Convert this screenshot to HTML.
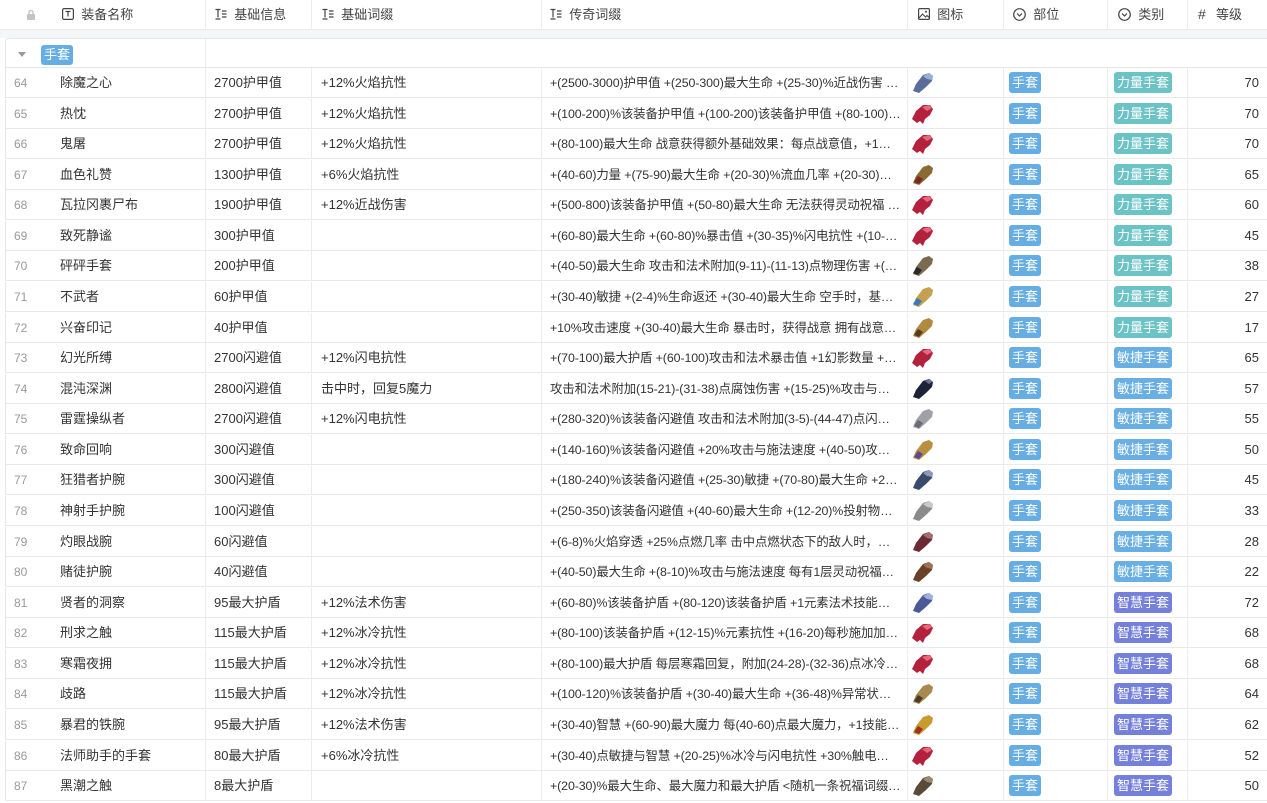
<!DOCTYPE html>
<html><head><meta charset="utf-8">
<style>
*{box-sizing:border-box;margin:0;padding:0}
body{width:1267px;height:803px;overflow:hidden;background:#fff;font-family:"Liberation Sans","Noto Sans CJK SC",sans-serif;font-size:13px;color:#333;position:relative}
.hd{position:absolute;left:0;top:0;width:1267px;height:30px;border-bottom:1px solid #ebebeb;background:#fff}
.hc{position:absolute;top:0;height:30px;line-height:29px;color:#444;font-size:13px;white-space:nowrap}
.vl{position:absolute;top:0;width:1px;height:30px;background:#ececec}
.band{position:absolute;left:0;top:30px;width:1267px;height:8px;background:#f5f6f7}
.grp{position:absolute;left:5px;top:38px;width:1262px;height:30px;background:#fff;border-top:1px solid #e6e6e6;border-left:1px solid #e6e6e6;border-bottom:1px solid #e6e6e6;border-top-left-radius:4px}
.row{position:absolute;left:5px;width:1262px;height:30px;border-bottom:1px solid #e9e9e9;border-left:1px solid #e6e6e6;background:#fff}
.c{position:absolute;top:0;height:29px;line-height:30px;white-space:nowrap;overflow:hidden}
.n{left:8px;color:#999;font-size:12px}
.nm{left:54px}
.b1{left:199px;width:106px;border-left:1px solid #ececec;padding-left:8px}
.b2{left:305px;width:230px;border-left:1px solid #ececec;padding-left:9px}
.b3{left:535px;width:366px;border-left:1px solid #ececec;padding-left:8px;padding-right:6px;text-overflow:ellipsis;font-size:12.4px;letter-spacing:-0.1px}
.b4{left:901px;width:96px;border-left:1px solid #ececec;padding-left:4px}
.b5{left:997px;width:104px;border-left:1px solid #ececec;padding-left:5px}
.b6{left:1101px;width:80px;border-left:1px solid #ececec;padding-left:6px}
.b7{left:1181px;width:81px;border-left:1px solid #ececec;text-align:right;padding-right:9px}
.t{display:inline-block;height:21px;line-height:21px;padding:0 3px;border-radius:3px;color:#fff;font-size:13px;vertical-align:middle;margin-top:-2px}
.sh{background:#66ade3}
.ll{background:#6cc3c6}
.mj{background:#6aafe4}
.zh{background:#7580da}
svg.g{position:absolute;left:3px;top:3px}
</style></head><body>
<div class="hd">
<span class="hc" style="left:26px;color:#bbb"><svg width="10" height="11" viewBox="0 0 10 11" style="vertical-align:-1px"><rect x="1" y="5" width="8" height="6" rx="1" fill="#c4c4c4"/><path d="M3 5V3.5a2 2 0 0 1 4 0V5" stroke="#c4c4c4" stroke-width="1.4" fill="none"/></svg></span>
<span class="hc" style="left:62px"><svg width="12" height="12" viewBox="0 0 12 12" style="vertical-align:-1px"><rect x="0.6" y="0.6" width="10.8" height="10.8" rx="1.5" fill="none" stroke="#444" stroke-width="1.2"/><path d="M3.5 3.5h5M6 3.5v5" stroke="#444" stroke-width="1.2"/></svg>&nbsp; 装备名称</span>
<span class="hc" style="left:215px"><svg width="12" height="12" viewBox="0 0 12 12" style="vertical-align:-1px"><path d="M0.5 1.5h5M3 1.5v8M0.5 11h5M7 3h4.5M7 6h4.5M7 9h4.5" stroke="#444" stroke-width="1.2"/></svg>&nbsp; 基础信息</span>
<span class="hc" style="left:322px"><svg width="12" height="12" viewBox="0 0 12 12" style="vertical-align:-1px"><path d="M0.5 1.5h5M3 1.5v8M0.5 11h5M7 3h4.5M7 6h4.5M7 9h4.5" stroke="#444" stroke-width="1.2"/></svg>&nbsp; 基础词缀</span>
<span class="hc" style="left:550px"><svg width="12" height="12" viewBox="0 0 12 12" style="vertical-align:-1px"><path d="M0.5 1.5h5M3 1.5v8M0.5 11h5M7 3h4.5M7 6h4.5M7 9h4.5" stroke="#444" stroke-width="1.2"/></svg>&nbsp; 传奇词缀</span>
<span class="hc" style="left:918px"><svg width="12" height="12" viewBox="0 0 12 12" style="vertical-align:-1px"><rect x="0.6" y="0.6" width="10.8" height="10.8" rx="1" fill="none" stroke="#444" stroke-width="1.2"/><path d="M1 10l3.5-4 3 3 1.5-1.5 2 2" stroke="#444" stroke-width="1.1" fill="none"/><circle cx="8" cy="3.8" r="1" fill="#444"/></svg>&nbsp; 图标</span>
<span class="hc" style="left:1013px"><svg width="13" height="13" viewBox="0 0 13 13" style="vertical-align:-2px"><circle cx="6.5" cy="6.5" r="5.8" fill="none" stroke="#444" stroke-width="1.2"/><path d="M4 5.5l2.5 2.5 2.5-2.5" stroke="#444" stroke-width="1.2" fill="none"/></svg>&nbsp; 部位</span>
<span class="hc" style="left:1118px"><svg width="13" height="13" viewBox="0 0 13 13" style="vertical-align:-2px"><circle cx="6.5" cy="6.5" r="5.8" fill="none" stroke="#444" stroke-width="1.2"/><path d="M4 5.5l2.5 2.5 2.5-2.5" stroke="#444" stroke-width="1.2" fill="none"/></svg>&nbsp; 类别</span>
<span class="hc" style="left:1198px;font-size:14px">#</span><span class="hc" style="left:1216px">等级</span>
<div class="vl" style="left:205px"></div><div class="vl" style="left:311px"></div><div class="vl" style="left:541px"></div><div class="vl" style="left:907px"></div><div class="vl" style="left:1003px"></div><div class="vl" style="left:1107px"></div><div class="vl" style="left:1187px"></div>
</div>
<div class="band"></div>
<div class="grp">
<svg width="8" height="6" viewBox="0 0 8 6" style="position:absolute;left:12px;top:13px"><path d="M0 0h8L4 5z" fill="#999"/></svg>
<span class="t sh" style="position:absolute;left:35px;top:6px;margin:0;height:20px;line-height:20px;padding:0 3px">手套</span>
<div style="position:absolute;left:199px;top:0;width:1px;height:29px;background:#ececec"></div>
</div>

<div class="row" style="top:68px"><div class="c n">64</div><div class="c nm">除魔之心</div><div class="c b1">2700护甲值</div><div class="c b2">+12%火焰抗性</div><div class="c b3">+(2500-3000)护甲值 +(250-300)最大生命 +(25-30)%近战伤害 +(15-20)%攻击速度</div><div class="c b4"><svg class="g" width="24" height="24" viewBox="0 0 24 24"><path d="M2 20l3-7 7-9 6-2 4 3-1 5-6 6-7 6z" fill="#5a6c9a"/><path d="M12 5l6-3 4 3-1 4-5-1z" fill="#9ab0d8"/></svg></div><div class="c b5"><span class="t sh">手套</span></div><div class="c b6"><span class="t ll">力量手套</span></div><div class="c b7">70</div></div>
<div class="row" style="top:99px"><div class="c n">65</div><div class="c nm">热忱</div><div class="c b1">2700护甲值</div><div class="c b2">+12%火焰抗性</div><div class="c b3">+(100-200)%该装备护甲值 +(100-200)该装备护甲值 +(80-100)最大生命</div><div class="c b4"><svg class="g" width="24" height="24" viewBox="0 0 24 24"><path d="M1 17l4-8 7-6 7 0 3 4-3 6-5 4-2 5-3-3-3 2z" fill="#b3213c"/><path d="M11 5l7-2 3 3-5 3z" fill="#e56a7a"/></svg></div><div class="c b5"><span class="t sh">手套</span></div><div class="c b6"><span class="t ll">力量手套</span></div><div class="c b7">70</div></div>
<div class="row" style="top:129px"><div class="c n">66</div><div class="c nm">鬼屠</div><div class="c b1">2700护甲值</div><div class="c b2">+12%火焰抗性</div><div class="c b3">+(80-100)最大生命 战意获得额外基础效果：每点战意值，+1%技能伤害</div><div class="c b4"><svg class="g" width="24" height="24" viewBox="0 0 24 24"><path d="M1 17l4-8 7-6 7 0 3 4-3 6-5 4-2 5-3-3-3 2z" fill="#b3213c"/><path d="M11 5l7-2 3 3-5 3z" fill="#e56a7a"/></svg></div><div class="c b5"><span class="t sh">手套</span></div><div class="c b6"><span class="t ll">力量手套</span></div><div class="c b7">70</div></div>
<div class="row" style="top:160px"><div class="c n">67</div><div class="c nm">血色礼赞</div><div class="c b1">1300护甲值</div><div class="c b2">+6%火焰抗性</div><div class="c b3">+(40-60)力量 +(75-90)最大生命 +(20-30)%流血几率 +(20-30)%流血伤害</div><div class="c b4"><svg class="g" width="24" height="24" viewBox="0 0 24 24"><path d="M2 20l3-7 7-9 6-2 4 3-1 5-6 6-7 6z" fill="#8a6a30"/><path d="M3 19l4-6 5 3-4 5z" fill="#7a2a20"/></svg></div><div class="c b5"><span class="t sh">手套</span></div><div class="c b6"><span class="t ll">力量手套</span></div><div class="c b7">65</div></div>
<div class="row" style="top:190px"><div class="c n">68</div><div class="c nm">瓦拉冈裹尸布</div><div class="c b1">1900护甲值</div><div class="c b2">+12%近战伤害</div><div class="c b3">+(500-800)该装备护甲值 +(50-80)最大生命 无法获得灵动祝福 每层战意</div><div class="c b4"><svg class="g" width="24" height="24" viewBox="0 0 24 24"><path d="M1 17l4-8 7-6 7 0 3 4-3 6-5 4-2 5-3-3-3 2z" fill="#b3213c"/><path d="M11 5l7-2 3 3-5 3z" fill="#e56a7a"/></svg></div><div class="c b5"><span class="t sh">手套</span></div><div class="c b6"><span class="t ll">力量手套</span></div><div class="c b7">60</div></div>
<div class="row" style="top:221px"><div class="c n">69</div><div class="c nm">致死静谧</div><div class="c b1">300护甲值</div><div class="c b2"></div><div class="c b3">+(60-80)最大生命 +(60-80)%暴击值 +(30-35)%闪电抗性 +(10-15)%攻击速度</div><div class="c b4"><svg class="g" width="24" height="24" viewBox="0 0 24 24"><path d="M1 17l4-8 7-6 7 0 3 4-3 6-5 4-2 5-3-3-3 2z" fill="#b3213c"/><path d="M11 5l7-2 3 3-5 3z" fill="#e56a7a"/></svg></div><div class="c b5"><span class="t sh">手套</span></div><div class="c b6"><span class="t ll">力量手套</span></div><div class="c b7">45</div></div>
<div class="row" style="top:251px"><div class="c n">70</div><div class="c nm">砰砰手套</div><div class="c b1">200护甲值</div><div class="c b2"></div><div class="c b3">+(40-50)最大生命 攻击和法术附加(9-11)-(11-13)点物理伤害 +(20-30)%</div><div class="c b4"><svg class="g" width="24" height="24" viewBox="0 0 24 24"><path d="M2 20l3-7 7-9 6-2 4 3-1 5-6 6-7 6z" fill="#7a6a50"/><path d="M2 19l4-6 5 3-4 5z" fill="#2a2a2a"/></svg></div><div class="c b5"><span class="t sh">手套</span></div><div class="c b6"><span class="t ll">力量手套</span></div><div class="c b7">38</div></div>
<div class="row" style="top:282px"><div class="c n">71</div><div class="c nm">不武者</div><div class="c b1">60护甲值</div><div class="c b2"></div><div class="c b3">+(30-40)敏捷 +(2-4)%生命返还 +(30-40)最大生命 空手时，基础攻击速度</div><div class="c b4"><svg class="g" width="24" height="24" viewBox="0 0 24 24"><path d="M2 20l3-7 7-9 6-2 4 3-1 5-6 6-7 6z" fill="#c4a050"/><path d="M2 19l4-6 5 3-4 5z" fill="#3a7ab8"/></svg></div><div class="c b5"><span class="t sh">手套</span></div><div class="c b6"><span class="t ll">力量手套</span></div><div class="c b7">27</div></div>
<div class="row" style="top:313px"><div class="c n">72</div><div class="c nm">兴奋印记</div><div class="c b1">40护甲值</div><div class="c b2"></div><div class="c b3">+10%攻击速度 +(30-40)最大生命 暴击时，获得战意 拥有战意时，+10%</div><div class="c b4"><svg class="g" width="24" height="24" viewBox="0 0 24 24"><path d="M2 20l3-7 7-9 6-2 4 3-1 5-6 6-7 6z" fill="#b08a40"/><path d="M3 19l4-6 5 3-4 5z" fill="#5a3a20"/></svg></div><div class="c b5"><span class="t sh">手套</span></div><div class="c b6"><span class="t ll">力量手套</span></div><div class="c b7">17</div></div>
<div class="row" style="top:343px"><div class="c n">73</div><div class="c nm">幻光所缚</div><div class="c b1">2700闪避值</div><div class="c b2">+12%闪电抗性</div><div class="c b3">+(70-100)最大护盾 +(60-100)攻击和法术暴击值 +1幻影数量 +100%</div><div class="c b4"><svg class="g" width="24" height="24" viewBox="0 0 24 24"><path d="M1 17l4-8 7-6 7 0 3 4-3 6-5 4-2 5-3-3-3 2z" fill="#b3213c"/><path d="M11 5l7-2 3 3-5 3z" fill="#e56a7a"/></svg></div><div class="c b5"><span class="t sh">手套</span></div><div class="c b6"><span class="t mj">敏捷手套</span></div><div class="c b7">65</div></div>
<div class="row" style="top:374px"><div class="c n">74</div><div class="c nm">混沌深渊</div><div class="c b1">2800闪避值</div><div class="c b2">击中时，回复5魔力</div><div class="c b3">攻击和法术附加(15-21)-(31-38)点腐蚀伤害 +(15-25)%攻击与施法速度</div><div class="c b4"><svg class="g" width="24" height="24" viewBox="0 0 24 24"><path d="M2 20l3-7 7-9 6-2 4 3-1 5-6 6-7 6z" fill="#1e2238"/><path d="M14 4l5-2 2 3-3 2z" fill="#6a70a0"/></svg></div><div class="c b5"><span class="t sh">手套</span></div><div class="c b6"><span class="t mj">敏捷手套</span></div><div class="c b7">57</div></div>
<div class="row" style="top:404px"><div class="c n">75</div><div class="c nm">雷霆操纵者</div><div class="c b1">2700闪避值</div><div class="c b2">+12%闪电抗性</div><div class="c b3">+(280-320)%该装备闪避值 攻击和法术附加(3-5)-(44-47)点闪电伤害</div><div class="c b4"><svg class="g" width="24" height="24" viewBox="0 0 24 24"><path d="M2 20l3-7 7-9 6-2 4 3-1 5-6 6-7 6z" fill="#a0a0a8"/><path d="M3 19l4-6 5 3-4 5z" fill="#6a6a78"/></svg></div><div class="c b5"><span class="t sh">手套</span></div><div class="c b6"><span class="t mj">敏捷手套</span></div><div class="c b7">55</div></div>
<div class="row" style="top:435px"><div class="c n">76</div><div class="c nm">致命回响</div><div class="c b1">300闪避值</div><div class="c b2"></div><div class="c b3">+(140-160)%该装备闪避值 +20%攻击与施法速度 +(40-50)攻击和法术</div><div class="c b4"><svg class="g" width="24" height="24" viewBox="0 0 24 24"><path d="M2 20l3-7 7-9 6-2 4 3-1 5-6 6-7 6z" fill="#b89040"/><path d="M3 19l4-6 5 3-4 5z" fill="#5a4a90"/></svg></div><div class="c b5"><span class="t sh">手套</span></div><div class="c b6"><span class="t mj">敏捷手套</span></div><div class="c b7">50</div></div>
<div class="row" style="top:465px"><div class="c n">77</div><div class="c nm">狂猎者护腕</div><div class="c b1">300闪避值</div><div class="c b2"></div><div class="c b3">+(180-240)%该装备闪避值 +(25-30)敏捷 +(70-80)最大生命 +2%生命</div><div class="c b4"><svg class="g" width="24" height="24" viewBox="0 0 24 24"><path d="M2 20l3-7 7-9 6-2 4 3-1 5-6 6-7 6z" fill="#3a4a6a"/><path d="M12 5l6-3 4 3-1 4-5-1z" fill="#8a9ab8"/></svg></div><div class="c b5"><span class="t sh">手套</span></div><div class="c b6"><span class="t mj">敏捷手套</span></div><div class="c b7">45</div></div>
<div class="row" style="top:496px"><div class="c n">78</div><div class="c nm">神射手护腕</div><div class="c b1">100闪避值</div><div class="c b2"></div><div class="c b3">+(250-350)该装备闪避值 +(40-60)最大生命 +(12-20)%投射物伤害</div><div class="c b4"><svg class="g" width="24" height="24" viewBox="0 0 24 24"><path d="M2 20l3-7 7-9 6-2 4 3-1 5-6 6-7 6z" fill="#8a8a8a"/><path d="M12 5l6-3 4 3-1 4-5-1z" fill="#c8c8c8"/></svg></div><div class="c b5"><span class="t sh">手套</span></div><div class="c b6"><span class="t mj">敏捷手套</span></div><div class="c b7">33</div></div>
<div class="row" style="top:527px"><div class="c n">79</div><div class="c nm">灼眼战腕</div><div class="c b1">60闪避值</div><div class="c b2"></div><div class="c b3">+(6-8)%火焰穿透 +25%点燃几率 击中点燃状态下的敌人时，附加火焰伤害</div><div class="c b4"><svg class="g" width="24" height="24" viewBox="0 0 24 24"><path d="M2 20l3-7 7-9 6-2 4 3-1 5-6 6-7 6z" fill="#6a2a30"/><path d="M12 5l6-3 4 3-1 4-5-1z" fill="#a07070"/></svg></div><div class="c b5"><span class="t sh">手套</span></div><div class="c b6"><span class="t mj">敏捷手套</span></div><div class="c b7">28</div></div>
<div class="row" style="top:557px"><div class="c n">80</div><div class="c nm">赌徒护腕</div><div class="c b1">40闪避值</div><div class="c b2"></div><div class="c b3">+(40-50)最大生命 +(8-10)%攻击与施法速度 每有1层灵动祝福，+(2-3)%</div><div class="c b4"><svg class="g" width="24" height="24" viewBox="0 0 24 24"><path d="M2 20l3-7 7-9 6-2 4 3-1 5-6 6-7 6z" fill="#6a4028"/><path d="M12 5l6-3 4 3-1 4-5-1z" fill="#a07050"/></svg></div><div class="c b5"><span class="t sh">手套</span></div><div class="c b6"><span class="t mj">敏捷手套</span></div><div class="c b7">22</div></div>
<div class="row" style="top:588px"><div class="c n">81</div><div class="c nm">贤者的洞察</div><div class="c b1">95最大护盾</div><div class="c b2">+12%法术伤害</div><div class="c b3">+(60-80)%该装备护盾 +(80-120)该装备护盾 +1元素法术技能等级 +10%</div><div class="c b4"><svg class="g" width="24" height="24" viewBox="0 0 24 24"><path d="M2 20l3-7 7-9 6-2 4 3-1 5-6 6-7 6z" fill="#4a5a98"/><path d="M12 5l6-3 4 3-1 4-5-1z" fill="#a0b0e0"/></svg></div><div class="c b5"><span class="t sh">手套</span></div><div class="c b6"><span class="t zh">智慧手套</span></div><div class="c b7">72</div></div>
<div class="row" style="top:618px"><div class="c n">82</div><div class="c nm">刑求之触</div><div class="c b1">115最大护盾</div><div class="c b2">+12%冰冷抗性</div><div class="c b3">+(80-100)该装备护盾 +(12-15)%元素抗性 +(16-20)每秒施加加剧 +5%</div><div class="c b4"><svg class="g" width="24" height="24" viewBox="0 0 24 24"><path d="M1 17l4-8 7-6 7 0 3 4-3 6-5 4-2 5-3-3-3 2z" fill="#b3213c"/><path d="M11 5l7-2 3 3-5 3z" fill="#e56a7a"/></svg></div><div class="c b5"><span class="t sh">手套</span></div><div class="c b6"><span class="t zh">智慧手套</span></div><div class="c b7">68</div></div>
<div class="row" style="top:649px"><div class="c n">83</div><div class="c nm">寒霜夜拥</div><div class="c b1">115最大护盾</div><div class="c b2">+12%冰冷抗性</div><div class="c b3">+(80-100)最大护盾 每层寒霜回复，附加(24-28)-(32-36)点冰冷基础伤害</div><div class="c b4"><svg class="g" width="24" height="24" viewBox="0 0 24 24"><path d="M1 17l4-8 7-6 7 0 3 4-3 6-5 4-2 5-3-3-3 2z" fill="#b3213c"/><path d="M11 5l7-2 3 3-5 3z" fill="#e56a7a"/></svg></div><div class="c b5"><span class="t sh">手套</span></div><div class="c b6"><span class="t zh">智慧手套</span></div><div class="c b7">68</div></div>
<div class="row" style="top:679px"><div class="c n">84</div><div class="c nm">歧路</div><div class="c b1">115最大护盾</div><div class="c b2">+12%冰冷抗性</div><div class="c b3">+(100-120)%该装备护盾 +(30-40)最大生命 +(36-48)%异常状态持续时间</div><div class="c b4"><svg class="g" width="24" height="24" viewBox="0 0 24 24"><path d="M2 20l3-7 7-9 6-2 4 3-1 5-6 6-7 6z" fill="#a88a50"/><path d="M3 19l4-6 5 3-4 5z" fill="#4a3a30"/></svg></div><div class="c b5"><span class="t sh">手套</span></div><div class="c b6"><span class="t zh">智慧手套</span></div><div class="c b7">64</div></div>
<div class="row" style="top:710px"><div class="c n">85</div><div class="c nm">暴君的铁腕</div><div class="c b1">95最大护盾</div><div class="c b2">+12%法术伤害</div><div class="c b3">+(30-40)智慧 +(60-90)最大魔力 每(40-60)点最大魔力，+1技能魔力</div><div class="c b4"><svg class="g" width="24" height="24" viewBox="0 0 24 24"><path d="M2 20l3-7 7-9 6-2 4 3-1 5-6 6-7 6z" fill="#c89a30"/><path d="M3 19l4-6 5 3-4 5z" fill="#a03020"/></svg></div><div class="c b5"><span class="t sh">手套</span></div><div class="c b6"><span class="t zh">智慧手套</span></div><div class="c b7">62</div></div>
<div class="row" style="top:741px"><div class="c n">86</div><div class="c nm">法师助手的手套</div><div class="c b1">80最大护盾</div><div class="c b2">+6%冰冷抗性</div><div class="c b3">+(30-40)点敏捷与智慧 +(20-25)%冰冷与闪电抗性 +30%触电几率 +(10-15)</div><div class="c b4"><svg class="g" width="24" height="24" viewBox="0 0 24 24"><path d="M1 17l4-8 7-6 7 0 3 4-3 6-5 4-2 5-3-3-3 2z" fill="#b3213c"/><path d="M11 5l7-2 3 3-5 3z" fill="#e56a7a"/></svg></div><div class="c b5"><span class="t sh">手套</span></div><div class="c b6"><span class="t zh">智慧手套</span></div><div class="c b7">52</div></div>
<div class="row" style="top:771px"><div class="c n">87</div><div class="c nm">黑潮之触</div><div class="c b1">8最大护盾</div><div class="c b2"></div><div class="c b3">+(20-30)%最大生命、最大魔力和最大护盾 &lt;随机一条祝福词缀&gt; &lt;随机</div><div class="c b4"><svg class="g" width="24" height="24" viewBox="0 0 24 24"><path d="M2 20l3-7 7-9 6-2 4 3-1 5-6 6-7 6z" fill="#5a4a38"/><path d="M12 5l6-3 4 3-1 4-5-1z" fill="#9a8a70"/></svg></div><div class="c b5"><span class="t sh">手套</span></div><div class="c b6"><span class="t zh">智慧手套</span></div><div class="c b7">50</div></div>
</body></html>
